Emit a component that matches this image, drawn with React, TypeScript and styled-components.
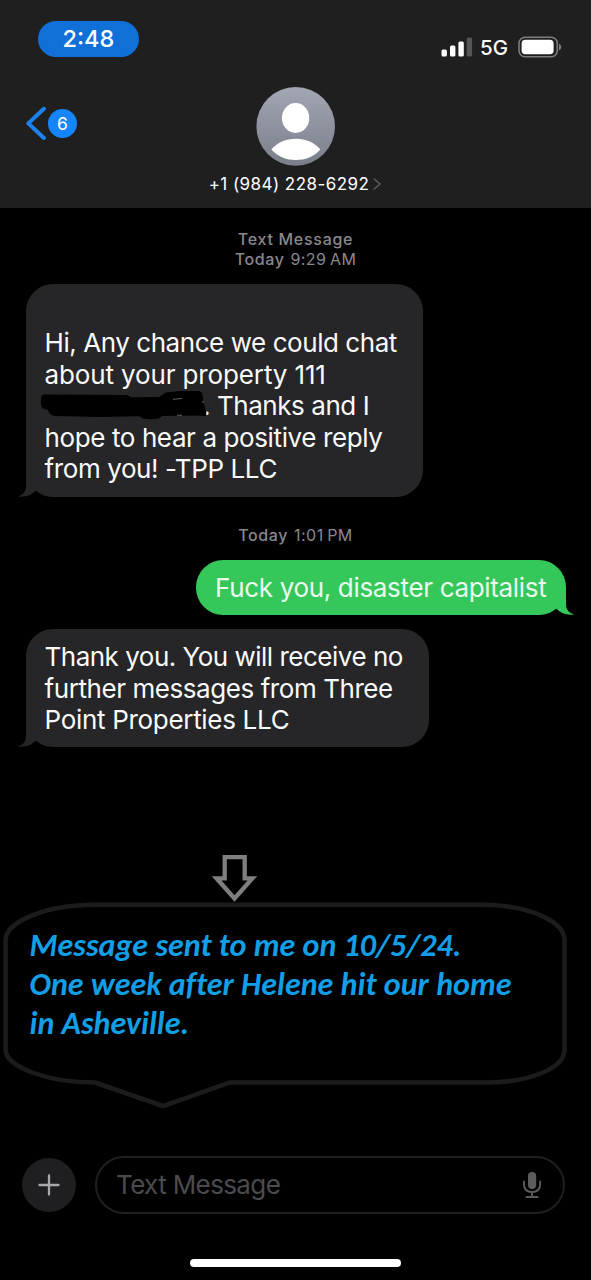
import React from 'react';
import styled, { createGlobalStyle } from 'styled-components';

const Global = createGlobalStyle`
  * { box-sizing: border-box; }
  body { margin: 0; background: #000; }
`;

const Screen = styled.main`
  width: 591px;
  height: 1280px;
  display: flex;
  flex-direction: column;
  overflow: hidden;
  background: #000;
  color: #fff;
  font-family: Inter, 'Liberation Sans', sans-serif;
`;

/* ---------- header ---------- */

const Header = styled.header`
  height: 208px;
  flex: none;
  background: #1f1f1f;
`;

const StatusBar = styled.div`
  height: 87px;
  padding: 21px 29px 0 37.6px;
  display: flex;
  justify-content: space-between;
  align-items: flex-start;
`;

const TimePill = styled.div`
  width: 101.5px;
  height: 36px;
  border-radius: 18px;
  background: #1070d7;
  display: flex;
  align-items: center;
  justify-content: center;
  font-size: 23.5px;
  font-weight: 500;
  line-height: 36px;
`;

const StatusIcons = styled.div`
  display: flex;
  align-items: center;
  padding-top: 15px;
  height: 37px;
`;

const Network = styled.span`
  width: 45.5px;
  padding-left: 7.5px;
  font-size: 20.5px;
  font-weight: 500;
  line-height: 22px;
  padding-top: 1.5px;
`;

const NavBar = styled.div`
  display: grid;
  grid-template-columns: 180px 1fr 180px;
  align-items: start;
`;

const BackButton = styled.div`
  display: flex;
  align-items: center;
  gap: 2px;
  padding: 19px 0 0 25px;
`;

const UnreadBadge = styled.span`
  width: 29px;
  height: 29px;
  border-radius: 50%;
  background: #1585fb;
  display: flex;
  align-items: center;
  justify-content: center;
  font-size: 17.5px;
  line-height: 29px;
`;

const Contact = styled.div`
  display: flex;
  flex-direction: column;
  align-items: center;
`;

const PhoneLine = styled.div`
  display: flex;
  align-items: center;
  gap: 4px;
  margin-top: 8px;
  font-size: 17px;
  line-height: 20px;
  letter-spacing: 0.45px;
  white-space: nowrap;
`;

/* ---------- conversation ---------- */

const Thread = styled.section`
  height: 647px;
  flex: none;
  display: flex;
  flex-direction: column;
  padding: 21px 25.5px 0;
`;

const Stamp = styled.div<{ $top?: number; $bottom: number }>`
  display: flex;
  flex-direction: column;
  align-items: center;
  margin: ${(p) => p.$top ?? 0}px 0 ${(p) => p.$bottom}px;
  color: #88888c;
  font-size: 16px;
  line-height: 20px;
  white-space: nowrap;
`;

const StampLabel = styled.span<{ $spacing?: number }>`
  font-weight: 500;
  letter-spacing: ${(p) => p.$spacing ?? 0.6}px;
`;

const StampTime = styled.div`
  display: flex;
  letter-spacing: 0.45px;
`;

const Clock = styled.span`
  margin: 0 3.5px 0 6px;
`;

const Bubble = styled.div<{ $sent?: boolean; $width: number; $top?: number; $height: number; $inset?: number }>`
  position: relative;
  align-self: ${(p) => (p.$sent ? 'flex-end' : 'flex-start')};
  width: ${(p) => p.$width}px;
  height: ${(p) => p.$height}px;
  margin: ${(p) => p.$top ?? 0}px 0 0;
  padding: ${(p) => p.$inset ?? 12}px 0 0 19px;
  border-radius: 27px;
  background: ${(p) => (p.$sent ? '#35c759' : '#262629')};
  color: ${(p) => (p.$sent ? '#e9fbec' : '#fafafa')};
`;

const Line = styled.div<{ $spacing: number }>`
  display: flex;
  font-size: 26px;
  line-height: 31.5px;
  letter-spacing: ${(p) => p.$spacing}px;
  white-space: pre;
`;

const Covered = styled.span`
  width: 158.5px;
`;

const TailShape = styled.svg<{ $sent?: boolean }>`
  position: absolute;
  bottom: -0.5px;
  ${(p) => (p.$sent ? 'right: -8px; transform: scaleX(-1);' : 'left: -8px;')}
`;

const Tail = ({ sent }: { sent?: boolean }) => (
  <TailShape $sent={sent} width="20" height="28" viewBox="0 0 20 28">
    <path
      d="M8 0V17.5Q8 25 0 27.4Q10.500 29 18 21.500L16 8Z"
      fill={sent ? '#35c759' : '#262629'}
    />
  </TailShape>
);

const RedactionShape = styled.svg`
  position: absolute;
  left: 14.5px;
  top: 104px;
`;

const Redaction = () => (
  <RedactionShape width="172" height="34" viewBox="40 388 172 34">
    <path
      d="M41 398Q41 394.500 45 394.500L127 395L131 397.300L159 397L166 392.500L180 391L198 391Q202 391 202.500 395L204 404L206.500 413Q206 417 203 416L199 415.500L162 416L159 418.500Q150 420 143 418.500L139 416.300L98 417L55 416Q49 415 48 410L43 408.500Q40.500 407 41 398Z"
      fill="#000"
    />
    <path d="M173 399.300L182 398.500M177 415.300H182" stroke="#77777a" strokeWidth="0.800" />
    <circle cx="203" cy="402" r="0.700" fill="#a5a5a8" />
  </RedactionShape>
);

/* ---------- annotation ---------- */

const Annotation = styled.section`
  position: relative;
  height: 300px;
  flex: none;
  padding: 71px 0 0 29.5px;
`;

const Outline = styled.svg`
  position: absolute;
  left: 0;
  top: 0;
`;

const Note = styled.p`
  position: relative;
  margin: 0;
  color: #129fe6;
  font: italic 700 32px/39px Carlito, Lato, sans-serif;
  letter-spacing: 0.03px;
  white-space: nowrap;
`;

/* ---------- composer ---------- */

const Composer = styled.footer`
  display: flex;
  align-items: center;
  padding: 0 26px 0 22px;
  height: 59px;
  gap: 19px;
`;

const AddButton = styled.div`
  width: 54px;
  height: 54px;
  border-radius: 50%;
  background: #1f1f21;
  display: flex;
  align-items: center;
  justify-content: center;
`;

const Field = styled.div`
  flex: 1;
  height: 58px;
  border: 2px solid #1f1f20;
  border-radius: 29px;
  display: flex;
  align-items: center;
  justify-content: space-between;
  padding: 0 21px 0 19px;
  color: #4b4b4e;
  font-size: 26px;
  line-height: 32px;
  letter-spacing: -0.62px;
`;

const HomeBar = styled.div`
  width: 211px;
  height: 8px;
  margin: 45px 0 0 190px;
  border-radius: 4px;
  background: #fff;
`;

const SignalIcon = () => (
  <svg width="32" height="20" viewBox="0 0 32 20">
    <rect x="0.500" y="12.500" width="5.400" height="7" rx="1.500" fill="#fff" />
    <rect x="9" y="8.500" width="5.400" height="11" rx="1.500" fill="#fff" />
    <rect x="17.400" y="4.500" width="5.400" height="15" rx="1.500" fill="#fff" />
    <rect x="25.700" y="0.500" width="5.400" height="19" rx="1.500" fill="#555557" />
  </svg>
);

const BatteryIcon = () => (
  <svg width="44" height="22" viewBox="0 0 44 22">
    <rect x="1" y="1.200" width="38.300" height="19.600" rx="6" fill="none" stroke="#7d7d7f" strokeWidth="1.600" />
    <rect x="3.600" y="3.800" width="32" height="14.400" rx="3.800" fill="#fff" />
    <path d="M41 7.500Q43.300 8.700 43.300 11Q43.300 13.300 41 14.500Z" fill="#7d7d7f" />
  </svg>
);

const Avatar = () => (
  <svg width="80" height="79" viewBox="0 0 80 79">
    <defs>
      <linearGradient id="avatar" x1="0" y1="0" x2="0" y2="1">
        <stop offset="0" stopColor="#a3a6b3" />
        <stop offset="1" stopColor="#7b7f8a" />
      </linearGradient>
    </defs>
    <circle cx="39.700" cy="39.400" r="39.300" fill="url(#avatar)" />
    <ellipse cx="39.600" cy="31" rx="13.700" ry="15" fill="#fff" />
    <path
      d="M15.300 62.500C21 55.500 30 51.700 39.800 51.700S58.800 55.500 64.300 62.500C58 70 49 73 39.800 73S22 70 15.300 62.500Z"
      fill="#fff"
    />
  </svg>
);

export default function App() {
  return (
    <Screen>
      <Global />
      <Header>
        <StatusBar>
          <TimePill>2:48</TimePill>
          <StatusIcons>
            <SignalIcon />
            <Network>5G</Network>
            <BatteryIcon />
          </StatusIcons>
        </StatusBar>
        <NavBar>
          <BackButton>
            <svg width="21" height="35" viewBox="0 0 21 35">
              <path d="M18.900 2.800L3.300 17.400L18.900 32" fill="none" stroke="#1a82f2" strokeWidth="4" strokeLinecap="round" strokeLinejoin="round" />
            </svg>
            <UnreadBadge>6</UnreadBadge>
          </BackButton>
          <Contact>
            <Avatar />
            <PhoneLine>
              +1 (984) 228-6292
              <svg width="9" height="12" viewBox="0 0 9 12">
                <path d="M1.200 1L7.200 6L1.200 11" fill="none" stroke="#5c5c5f" strokeWidth="1.500" strokeLinecap="round" strokeLinejoin="round" />
              </svg>
            </PhoneLine>
          </Contact>
        </NavBar>
      </Header>

      <Thread>
        <Stamp $bottom={15}>
          <StampLabel $spacing={0.72}>Text Message</StampLabel>
          <StampTime>
            <StampLabel>Today</StampLabel>
            <Clock>9:29</Clock>
            <span>AM</span>
          </StampTime>
        </Stamp>
        <Bubble $width={397} $height={212.5} $inset={43}>
          <Line $spacing={-0.44}>Hi, Any chance we could chat</Line>
          <Line $spacing={-0.13}>about your property 111</Line>
          <Line $spacing={-0.44}>
            <Covered />
            . Thanks and I
          </Line>
          <Line $spacing={-0.39}>hope to hear a positive reply</Line>
          <Line $spacing={-0.39}>from you! -TPP LLC</Line>
          <Redaction />
          <Tail />
        </Bubble>
        <Stamp $top={28.5} $bottom={15}>
          <StampTime>
            <StampLabel>Today</StampLabel>
            <Clock>1:01</Clock>
            <span>PM</span>
          </StampTime>
        </Stamp>
        <Bubble $sent $width={369.5} $height={54.5}>
          <Line $spacing={-0.33}>Fuck you, disaster capitalist</Line>
          <Tail sent />
        </Bubble>
        <Bubble $width={403.5} $height={117.5} $top={14.5}>
          <Line $spacing={-0.5}>Thank you. You will receive no</Line>
          <Line $spacing={-0.43}>further messages from Three</Line>
          <Line $spacing={-0.31}>Point Properties LLC</Line>
          <Tail />
        </Bubble>
      </Thread>

      <Annotation>
        <Outline width="591" height="260" viewBox="0 855 591 260" fill="none">
          <path
            d="M95 904.700H482C530 904.700 564.500 922 564.500 940V1050C564.500 1068 530 1082.500 487 1082.500H230L163 1106L95 1082.500C45 1082.500 5.600 1066 5.600 1050V940C5.600 922 45 904.700 95 904.700Z"
            stroke="#1c1c1c"
            strokeWidth="4.500"
          />
          <path
            d="M224.700 857.200H244.700V878.300H252.500L234.500 898.500L216.500 878.300H224.700Z"
            stroke="#7f7f7f"
            strokeWidth="4.300"
          />
        </Outline>
        <Note>
          Message sent to me on 10/5/24.
          <br />
          One week after Helene hit our home
          <br />
          in Asheville.
        </Note>
      </Annotation>

      <Composer>
        <AddButton>
          <svg width="22" height="22" viewBox="0 0 22 22">
            <path d="M11 1.500V20.500M1.500 11H20.500" stroke="#a9a9ac" strokeWidth="2.300" strokeLinecap="round" />
          </svg>
        </AddButton>
        <Field>
          Text Message
          <svg width="20" height="28" viewBox="0 0 20 28" fill="none">
            <rect x="6" y="1" width="8.200" height="17.200" rx="4.100" fill="#5c5c5f" />
            <path d="M2 10.500V13C2 18.500 5.300 21 10 21S18.200 18.500 18.200 13V10.500M10 21V26M4.500 26H15.700" stroke="#5c5c5f" strokeWidth="1.900" strokeLinecap="round" />
          </svg>
        </Field>
      </Composer>
      <HomeBar />
    </Screen>
  );
}
